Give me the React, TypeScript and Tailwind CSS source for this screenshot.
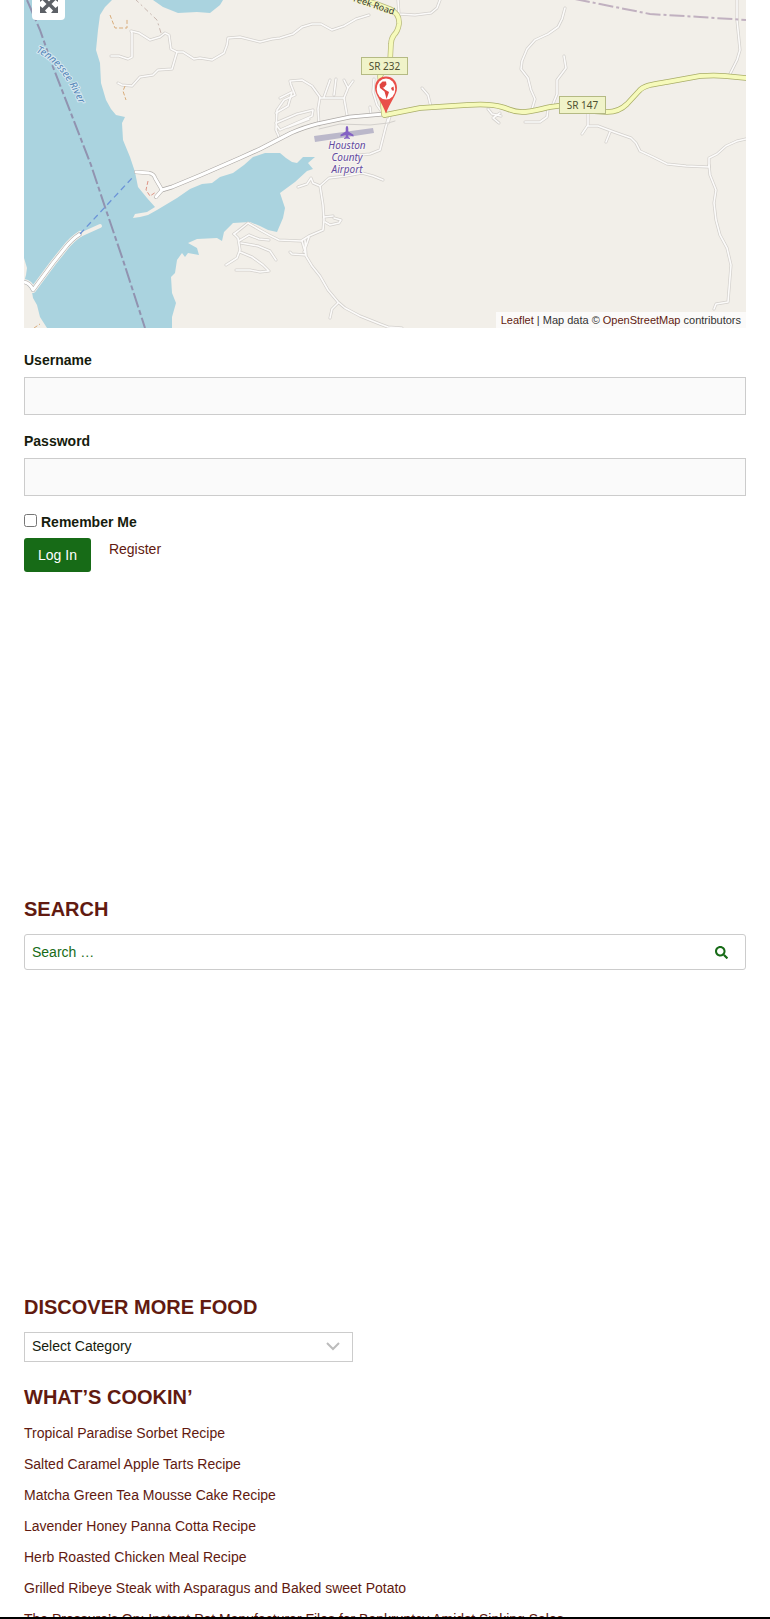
import { useState } from 'react';
import { FaSearch } from 'react-icons/fa';

const RECIPES = [
  'Tropical Paradise Sorbet Recipe',
  'Salted Caramel Apple Tarts Recipe',
  'Matcha Green Tea Mousse Cake Recipe',
  'Lavender Honey Panna Cotta Recipe',
  'Herb Roasted Chicken Meal Recipe',
  'Grilled Ribeye Steak with Asparagus and Baked sweet Potato',
  'The Pressure’s On: Instant Pot Manufacturer Files for Bankruptcy Amidst Sinking Sales',
];

const WATER = [
  'M24 0H112L105 7L100 15L98 30L96 50L100 63L101 83L106 100L111 109L116 115L125 117L122 123L123 140L130 157L135 172L138 187L147 198L155 207L147 212L135 214L133 218L140 217L148 215L157 210L177 198L190 189L202 184L212 183L220 177L233 173L244 165L253 157L265 153L280 153L286 158L292 162L297 163L303 157L315 157L308 163L313 169L307 171L295 182L280 193L285 208L283 218L277 232L268 230L260 226L250 222L233 223L224 232L222 241L217 238L197 239L188 243L197 248L199 255L188 253L185 257L182 253L177 260L175 273L171 277L172 293L176 303L172 317L172 328H47L40 317L37 305L33 298L32 292L24 282L26 275L27 268L24 258Z',
  'M153 0L163 7L178 13L197 12L210 13L220 5L223 0Z',
];

const LANES = [
  'M111 56L119 56L128 59L132 57L132 33L131 31L139 33L150 40L160 37L165 33L169 35L171 49L177 52L183 52L194 59L200 58L212 60L224 53L227 45L228 38L240 37L260 42L272 39L280 38L293 34L302 27L312 24L321 24L332 30L344 26L356 19L369 15',
  'M177 52L172 69L158 70L153 75L140 77L132 86L122 85L118 83',
  'M398 0L399 14L415 15L431 13L437 8L440 0',
  'M280 139L276 130L277 110L284 100L295 95L291 85L290 81L302 80L312 86L320 97L318 109L319 125',
  'M320 98L344 98L347 115M344 98L348 88L344 80M348 88L353 81M324 97L330 80M334 95L336 79',
  'M276 113L288 106L292 92L280 98M276 123L297 114L313 110L312 116L280 130L277 126M288 127L309 119',
  'M374 79L373 92L377 105L384 115M371 115L370 107',
  'M388 119L385 130L380 150L370 154L350 156M388 123L390 116',
  'M422 88L428 95L431 107M488 109L492 114L501 116M500 113L493 118L499 123',
  'M298 187L307 184L311 178L313 183L320 186L329 178L346 176L362 173L373 176L383 180',
  'M320 186L323 205L324 220L323 230L309 236L301 241L279 240L269 235L260 230L248 223L238 231L234 234',
  'M324 217L333 216M325 222L330 225L339 223L341 220L334 218',
  'M309 237L304 252M302 241L306 255L292 254L290 252M305 240L306 256L312 266L320 276L328 290L338 302L345 308L360 316L380 324L388 327L402 328M338 303L332 309L330 318',
  'M234 234L238 238L240 250L237 258L226 265M239 241L249 235L259 239L269 240M241 243L258 246L270 251L276 260M240 252L252 257L263 265L269 271L260 272L250 270L236 270',
  'M565 8L562 19L558 27L548 34L535 40L527 49L522 61L521 69L528 78L531 90L535 99L532 109M564 56L566 68L557 80L557 94L553 104',
  'M525 122L540 122L547 117L548 109M588 113L588 125L582 134M588 126L598 126L614 132L631 138L636 143L640 151L653 157L667 164L686 166L709 167L709 158L717 154L726 146L737 141L746 139',
  'M610 132L606 142M737 0L737 20L740 50L737 60L730 74',
  'M709 165L710 175L716 190L714 203L716 220L720 235L727 248L731 265L728 302L716 304L714 309',
];

const SR_147 = 'M385 115L420 108L467 105C480 104 492 104 502 107C510 109 512 112 522 112C532 112 540 109 550 107L565 105L590 111L607 112C616 112 622 109 627 104L639 91C644 85 655 84 667 82L700 76Q715 75 725 76L746 78';
const SR_232 = 'M350 -6Q365 1 377 4L390 9Q400 14 399 24Q398 31 394 35Q391 39 391 44L390 62L380 76L384 115';
const MAIN_ROAD = 'M162 190L172 187L201 175L240 158L260 149L291 133Q305 127 317 124L350 117L384 114';
const CAUSEWAY = 'M24 282Q30 283 33 290L53 263L65 248Q72 239 80 234';
const FERRY_ROAD = 'M136 172L149 173Q154 174 155 178L162 190L156 197';

const labelFont = "font-['Noto_Sans','Open_Sans',sans-serif]";

function MapDrawing() {
  return (
    <svg
      className={`block h-full w-full ${labelFont}`}
      viewBox="24 0 722 328"
      preserveAspectRatio="xMidYMid slice"
      role="img"
      aria-label="Map of Houston County Airport"
    >
      <rect x="24" width="722" height="328" fill="#f2efe9" />
      {WATER.map((d) => (
        <path key={d} d={d} fill="#aad3df" />
      ))}

      <g fill="none" strokeLinejoin="round" strokeLinecap="round">
        {LANES.map((d) => (
          <path key={d} d={d} stroke="#d3d0cc" strokeWidth="3" />
        ))}
        {LANES.map((d) => (
          <path key={d} d={d} stroke="#fcfbfa" strokeWidth="1.600" />
        ))}
        <path d="M80 235L100 226" stroke="#f2efe9" strokeWidth="4" />
        <path d={CAUSEWAY} stroke="#f2efe9" strokeWidth="6" />
        <path d={CAUSEWAY} stroke="#aaa" strokeWidth="4" />
        <path d={CAUSEWAY} stroke="#fff" strokeWidth="3" />
        <path d={FERRY_ROAD} stroke="#b5b2ae" strokeWidth="4" />
        <path d={MAIN_ROAD} stroke="#aca8a5" strokeWidth="4.500" />
        <path d={FERRY_ROAD} stroke="#fff" strokeWidth="2.800" />
        <path d={MAIN_ROAD} stroke="#fff" strokeWidth="3.200" />
        <path d="M319 129L340 124L370 125L388 123L395 121" stroke="#d3d0cc" strokeWidth="1" />
        <path d={SR_232} stroke="#b9ba7c" strokeWidth="5.500" />
        <path d={SR_147} stroke="#a9ad68" strokeWidth="5.500" />
        <path d={SR_232} stroke="#f6fabb" strokeWidth="4" />
        <path d={SR_147} stroke="#f6fabb" strokeWidth="4" />
      </g>

      {/* footpaths */}
      <g fill="none" stroke="#d9ad7c" strokeWidth="1" strokeDasharray="4 2">
        <path d="M110 15L115 28H127V18" />
        <path d="M125 86L123 91L126 100" />
        <path d="M148 181L146 190L150 196L156 192" stroke="#dd9485" />
        <path d="M34 328L40 324" />
        <path d="M135 -1L157 20L161 33" stroke="#c8b7b0" strokeDasharray="5 3 2 3" />
      </g>

      {/* borders and the ferry line */}
      <g fill="none">
        <path d="M27 0L40 30L53 67L91 165L105 207L123 260L145 328" stroke="#9193b0" strokeWidth="2" strokeDasharray="15 3 5 3" />
        <path d="M575 -1L600 4L650 14L700 17L746 20" stroke="#c1b1c0" strokeWidth="2" strokeDasharray="15 3 3 3" />
        <path d="M80 234L133 177" stroke="#6c94d8" strokeWidth="1.300" strokeDasharray="6 4" />
      </g>

      {/* runway and plane */}
      <path d="M314 136L373 128L374 133L315 142Z" fill="#bbb8ca" />
      <path
        d="M347 126c1 0 1.300 1.500 1.300 3v2.500l5.200 3.300v1.700l-5.200-1.600v2l1.600 1.200v1l-2.900-.6-2.900.6v-1l1.600-1.200v-2l-5.200 1.600v-1.700l5.200-3.300V129c0-1.500.3-3 1.300-3z"
        fill="#8461c4"
      />
      <g fontSize="10" fontStyle="italic" textAnchor="middle" fill="#644ca0" stroke="#f7f5f2" strokeWidth="2" paintOrder="stroke">
        <text x="347" y="149">Houston</text>
        <text x="347" y="161">County</text>
        <text x="347" y="173">Airport</text>
      </g>

      <path id="river" d="M36 52Q60 62 78 101L84 116" fill="none" />
      <text fontSize="10" fontStyle="italic" fill="#5285b8" stroke="#d7e8f0" strokeWidth="2" paintOrder="stroke">
        <textPath href="#river">Tennessee River</textPath>
      </text>
      <text transform="translate(353 1) rotate(19)" fontSize="9" fill="#303030" stroke="#f6fabb" strokeWidth="1" paintOrder="stroke">
        reek Road
      </text>

      <g fill="#f0f3c9" stroke="#b5ba84">
        <rect x="361.500" y="57.500" width="46" height="17" />
        <rect x="559.500" y="96.500" width="46" height="17" />
      </g>
      <g fontSize="10" textAnchor="middle" fill="#4f5132">
        <text x="384.500" y="70">SR 232</text>
        <text x="582.500" y="109">SR 147</text>
      </g>

      {/* marker */}
      <path d="M386 76.500C379.500 76.500 375 81 375 88C375 95 382 102 386 113.500C390 102 397 95 397 88C397 81 392.500 76.500 386 76.500Z" fill="#e9504a" />
      <ellipse cx="386" cy="89" rx="9.300" ry="10.500" fill="#fff" />
      <path d="M379.500 84.500L382.500 81.500L386 81.500L386.500 84.500L384 87.500L382.500 87.500L385.500 90L389 92L388 95L386.500 99L385.500 95L384.500 91.500L380 88ZM391 88L393.500 86.500L394 90.500L392 90.500Z" fill="#df4540" />
    </svg>
  );
}

function ExpandIcon() {
  return (
    <svg width="18" height="18" viewBox="0 0 18 18" fill="currentColor" aria-hidden="true">
      <path d="M0 0H7L5 2.500L9 6.500L13 2.500L11 0H18V7L15.500 5L11.500 9L15.500 13L18 11V18H11L13 15.500L9 11.500L5 15.500L7 18H0V11L2.500 13L6.500 9L2.500 5L0 7Z" />
    </svg>
  );
}

function Heading({ children }: { children: React.ReactNode }) {
  return <h2 className="mb-[13px] text-[20px] leading-6 font-bold text-[#611a10] uppercase">{children}</h2>;
}

function Field({ id, label, type }: { id: string; label: string; type: string }) {
  return (
    <div className="mb-[15px]">
      <label htmlFor={id} className="mb-1.5 block font-bold">{label}</label>
      <input id={id} type={type} className="block h-[38px] w-full border border-[#cccccc] bg-[#fafafa] px-2 outline-none" />
    </div>
  );
}

export default function App() {
  const [remember, setRemember] = useState(false);

  return (
    <div className="max-h-screen overflow-hidden border-b-2 border-black bg-white px-6 font-['Liberation_Sans',Arial,sans-serif] text-[14px] leading-[22px] text-[#161c0d]">
      <div className="relative h-[328px] overflow-hidden">
        <MapDrawing />
        <button
          type="button"
          title="Full screen"
          className="absolute -top-3 left-2 flex h-8 w-[33px] items-center justify-center rounded-sm bg-white text-[#5c6066]"
        >
          <ExpandIcon />
        </button>
        <div className="absolute right-0 bottom-0 bg-white/70 px-[5px] text-[11px] leading-4 text-[#333]">
          <a href="#leaflet" className="text-[#611a10]">Leaflet</a> | Map data ©{' '}
          <a href="#osm" className="text-[#611a10]">OpenStreetMap</a> contributors
        </div>
      </div>

      <form className="mt-[21px]" onSubmit={(e) => e.preventDefault()}>
        <Field id="username" label="Username" type="text" />
        <Field id="password" label="Password" type="password" />
        <label className="mb-[5px] flex items-center gap-1 font-bold">
          <input
            type="checkbox"
            checked={remember}
            onChange={(e) => setRemember(e.target.checked)}
            className="mb-1 h-[13px] w-[13px]"
          />
          Remember Me
        </label>
        <div className="flex items-start gap-[18px]">
          <button type="submit" className="h-[34px] rounded-[3px] bg-[#176b17] px-3.5 text-white">Log In</button>
          <a href="#register" className="text-[#611a10]">Register</a>
        </div>
      </form>

      <section className="mt-[325px]">
        <Heading>Search</Heading>
        <form role="search" className="flex h-9 rounded-[3px] border border-[#cccccc]" onSubmit={(e) => e.preventDefault()}>
          <input
            type="search"
            aria-label="Search"
            placeholder="Search …"
            className="min-w-0 flex-1 px-[7px] outline-none placeholder:text-[#176b17]"
          />
          <button type="submit" aria-label="Submit search" className="flex w-12 items-center justify-center text-[#176b17]">
            <FaSearch size={13} />
          </button>
        </form>
      </section>

      <section className="mt-[325px]">
        <Heading>Discover more food</Heading>
        <div className="relative w-[329px] max-w-full">
          <select aria-label="Category" className="block h-[30px] w-full appearance-none border border-[#cccccc] bg-white px-[7px] pb-0.5 leading-5 outline-none">
            <option>Select Category</option>
          </select>
          <svg className="pointer-events-none absolute top-[9px] right-3 h-3 w-4" viewBox="0 0 16 12" fill="none" stroke="#bcbcbc" strokeWidth="2">
            <path d="M2 2L8 8L14 2" />
          </svg>
        </div>
      </section>

      <section className="mt-[23px]">
        <Heading>What’s cookin’</Heading>
        <ul className="flex flex-col gap-[9px]">
          {RECIPES.map((title) => (
            <li key={title}>
              <a href="#recipe" className="text-[#611a10]">{title}</a>
            </li>
          ))}
        </ul>
      </section>
    </div>
  );
}
